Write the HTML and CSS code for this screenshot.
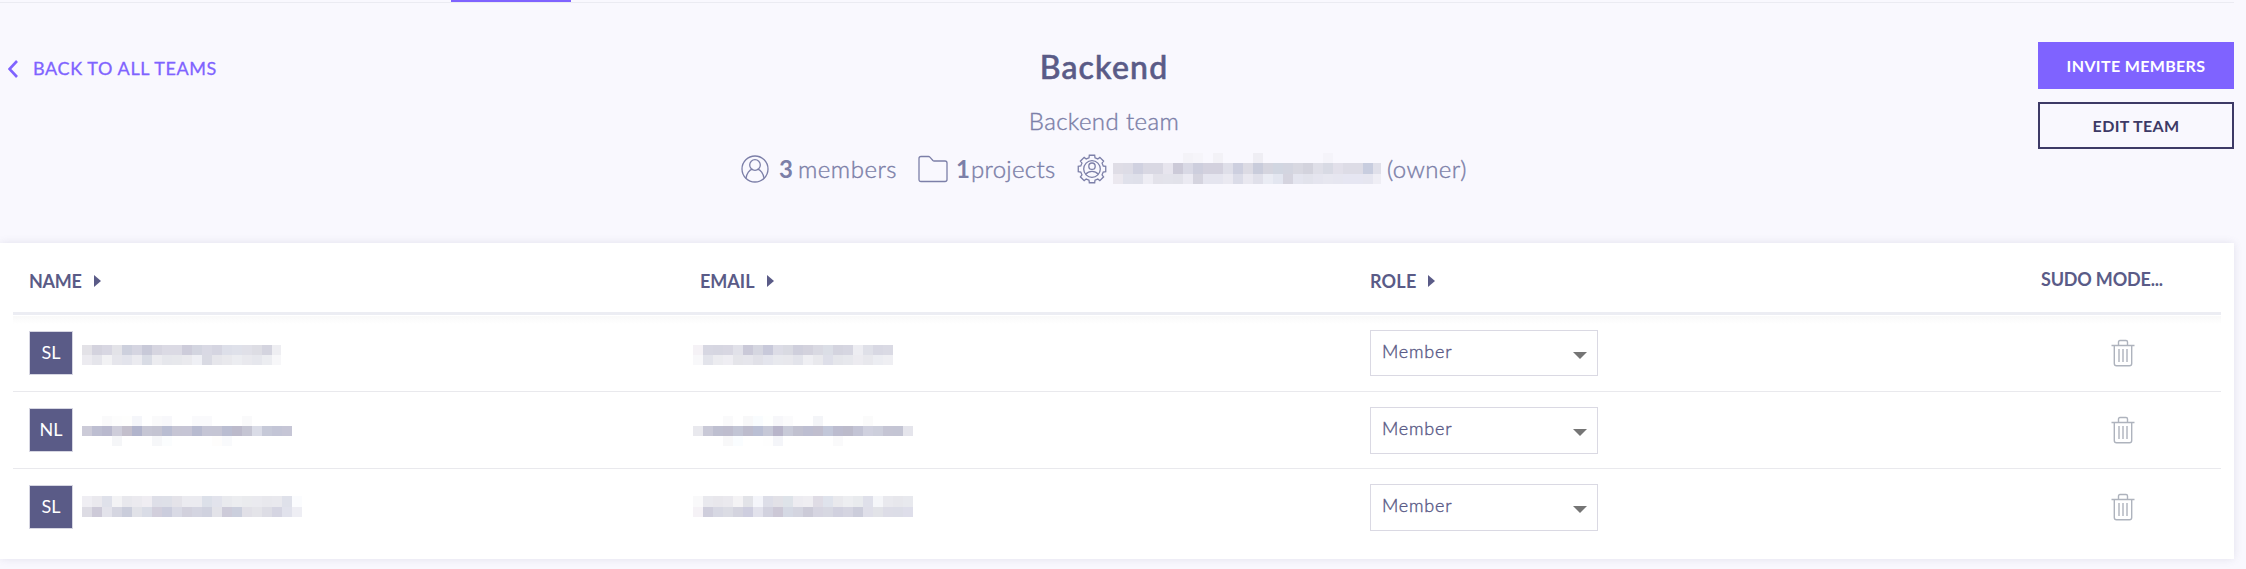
FILE: index.html
```html
<!DOCTYPE html>
<html lang="en">
<head>
<meta charset="utf-8">
<title>Backend</title>
<link rel="stylesheet" href="styles.css">
</head>
<body>
<svg width="0" height="0" class="sprite">
  <symbol id="trash" viewBox="0 0 24 28"><path d="M.5 6.500h23M7.500 6V3q0-1.500 1.500-1.500h6q1.500 0 1.500 1.500v3M3.300 6.500v18q0 2.200 2.200 2.200h13q2.200 0 2.200-2.200v-18M8 10v13M12 10v13M16 10v13"/></symbol>
</svg>
<nav class="tabs"><span class="tab"></span></nav>
<header class="head">
  <a class="back"><svg class="chev" viewBox="0 0 10 18"><path d="M9 1 1.500 9 9 17"/></svg><span>BACK TO ALL TEAMS</span></a>
  <div class="summary">
    <h1>Backend</h1>
    <p class="desc">Backend team</p>
    <div class="meta">
      <svg class="icon user" viewBox="0 0 28 28"><circle cx="14" cy="14" r="13"/><circle cx="14" cy="10" r="5.300"/><path d="M5 23.300c.6-5 3.500-8.600 6.400-9.200M23 23.300c-.6-5-3.500-8.600-6.400-9.200"/></svg>
      <b class="n3">3</b><span class="t-members">members</span>
      <svg class="icon folder" viewBox="0 0 30 28"><path d="M3 1.500h7.500q.8 0 1.400.6l3 3.400q.5.500 1.200.5h10.900q2 0 2 2v16.500q0 2-2 2H3q-2 0-2-2v-21q0-2 2-2z"/></svg>
      <b class="n1">1</b><span class="t-projects">projects</span>
      <svg class="icon gear" viewBox="0 0 30 30"><path id="cog"/><circle cx="15" cy="15" r="8.300"/><circle cx="15" cy="12.200" r="3.200"/><path d="M8.600 20.300c2-2.300 4.100-3 6.400-3s4.400.7 6.400 3"/></svg>
      <span class="mosaic owner-name" data-m="owner"></span><span class="t-owner">(owner)</span>
    </div>
  </div>
  <div class="actions">
    <button class="btn primary"><span>INVITE MEMBERS</span></button>
    <button class="btn outline"><span>EDIT TEAM</span></button>
  </div>
</header>
<main class="panel">
  <div class="row thead">
    <div class="th name"><span>NAME</span><i class="sort"></i></div>
    <div class="th"><span>EMAIL</span><i class="sort"></i></div>
    <div class="th role"><span>ROLE</span><i class="sort"></i></div>
    <div class="th sudo"><span>SUDO MODE...</span></div>
  </div>
  <div class="row r1">
    <div class="cell"><span class="avatar">SL</span><span class="mosaic" data-m="name1"></span></div>
    <div class="cell email"><span class="mosaic" data-m="email1"></span></div>
    <div class="cell"><div class="select"><span>Member</span><i></i></div></div>
    <div class="cell del"><svg class="trash"><use href="#trash"/></svg></div>
  </div>
  <div class="row r2">
    <div class="cell"><span class="avatar">NL</span><span class="mosaic" data-m="name2"></span></div>
    <div class="cell email"><span class="mosaic" data-m="email2"></span></div>
    <div class="cell"><div class="select"><span>Member</span><i></i></div></div>
    <div class="cell del"><svg class="trash"><use href="#trash"/></svg></div>
  </div>
  <div class="row r3">
    <div class="cell"><span class="avatar">SL</span><span class="mosaic" data-m="name3"></span></div>
    <div class="cell email"><span class="mosaic" data-m="email3"></span></div>
    <div class="cell"><div class="select"><span>Member</span><i></i></div></div>
    <div class="cell del"><svg class="trash"><use href="#trash"/></svg></div>
  </div>
</main>
<script src="mosaic.js"></script>
</body>
</html>
```
FILE: mosaic.js
```js
// Redacted values: rows of [height, colours]; "-" leaves a tile empty.
const DATA = {
  owner: { width: 268, rows: [
    [10, "- - - - - - - f4f3f8 f6f5fa - f3f2f7 - - - efeef4 - - - - - - f5f4fa - - - - -"],
    [11, "dfdde6 dddce6 d0d1e0 d9d8e3 d9d8e3 e7e5ee cccad8 d9d9e5 cdcedd d3d1de d3d1de dfdfe9 cdcfdf dcdbe4 c9ccdb d5d5df d1d6e1 d3d5e0 d8d8e1 d3d3dd dfdfe8 d8dae4 e2e0ea dddce6 dddce6 c8cddf e0e0ea"],
    [10, "ebe8ef e0e1eb dfe0ea eeedf4 e3e2ea e3e3eb e2e2ea ebeaf2 d5d4df e5e5ef e5e5ef eae9f1 dbdce8 e9e8f0 e0e0ea eaecf4 e3e6f0 d5d4df e4e5ef e2e3ec e5e5ef e7e7f0 e6e6f0 e6e6f2 e6e6f2 e6e6f0 efeef5"]] },
  name1: { width: 199, rows: [
    [10, "e3e2e7 d4d3de d8d7e2 e3e3e8 cdd0dd d5d5e1 c8c9d8 d6d5e0 dbdae4 dbdae4 cdccda d3d5e0 d9d9e4 d5d5e1 dddfe9 dfe1ea e0e0e8 dddde4 d4d4df eeeef2"],
    [10, "ecebf0 e5e5eb f2f2f4 e6e6ec e3e4ec ebebf0 d9dce5 ececf0 e6e7ec e7e8ec eaeaee eff0f5 d9dae3 e6e6eb e9e9ed ecedf1 e9e9ee e6e7ed ecedf1 f7f7f9"]] },
  name2: { width: 210, rows: [
    [10, "- - fafafb fdfdfd fefefd f5f6fa - fafafb f8f8fb - - fafafc fafafc - - - fafafb - - - -"],
    [10, "cccbd8 bdbed1 b9b9ce cecdda c3bfcc b1b4cc c6c6d4 c4c4d2 b9bdd2 c6c5d4 c6c5d5 b8bbd0 c5c5d5 c5c5d4 babdd1 bcbacb c5c5d3 dadce7 c6c9d8 c3c5d6 c6c6d6"],
    [10, "- - - f5f6f8 - - - f6f7f9 fbfdfe - - - - fefdfc f9fafc - - - - - -"]] },
  name3: { width: 220, rows: [
    [11, "efeef3 eae9ee dfe1ea f3f3f5 e8e8ed ebeaef efedf2 dedfe8 dee0e8 e4e3e9 ebebf0 ebebf0 dce0e9 e2e3ec e9eaee ecedf0 eaebee eaeaef e8e8ed e9e9ee dfe1ea fbfcfe"],
    [10, "dddce4 cdcad8 e3e3eb d5d6e1 cacddb e1e2e8 d9dce6 d2cfdc cbcddd d9dae5 d2d1dd d4d5e1 d0d2df e3e3e9 cdcbd9 cbcfdd e1e0e7 e4e4e9 dddde5 d5d5e2 e1e2ec eeeef4"]] },
  email1: { width: 200, rows: [
    [10, "f5f2f6 d7d7e2 d6d6e1 d8d7e2 e1e1e9 cac9d8 d5d6e0 c8c9da dcdce6 d9dae2 cfcfdc d3d2dd d9d9e2 dbdee6 d4d4df d6d6e1 ededf2 dfe0e8 d8d8e3 dadae4"],
    [10, "f8f8fa e3e4eb ececf0 efeef3 e5e5ea e6e6ec e1e1e8 e4e5ed e8e9ee e8e8ed e3e4eb efeff3 e9e9ed dedfe9 e5e6eb e7e8ed ecebf0 e8e8ed ecedf2 efeff3"]] },
  email2: { width: 220, rows: [
    [10, "- - - fafafb - f8f8f9 f9fcfe fefffe f7f7fa fbfbfc - - f4f5f8 - - - - fbfbfb - - - -"],
    [10, "e9e9ee c9c9d7 bebfd0 bebdce c2c5d5 bdbccd babfd4 c6c8d7 b8b5ca c8cad8 c1c1d0 bdbed1 c0bece c2c7d9 bcbccf bcbbcb c3c4d5 d0d1df cdcfdc c5c5d4 c4c5d4 e5e5ec"],
    [10, "- - - f8f8f9 fafdff - - fefefe f4f5f9 - - - - - fafafb - - - - - - -"]] },
  email3: { width: 220, rows: [
    [11, "f9f9fa e9e9ee e8e7ec eae9ee f4f3f5 e2e3e8 f4f5fa dddee8 e2e1e7 dee3e9 edecf1 efeef2 dfdce5 dfe3ec e9e9ed edeef1 e9ebee dfe0ea f5f6f9 e9e9ee e7e7ec e8e9ee"],
    [10, "f5f2f6 cfcedc d7d8e3 dbdce4 d4d4df cecedf e2e2ec d2d2df ccc8d6 d5d9e4 d4d5e0 cccbd8 d6d5e1 d7d8e2 d1d1df d5d5e1 cccddb dfdfe9 e2e3e8 dddde7 dcdde7 dedeea"]] }
};
document.querySelectorAll("[data-m]").forEach(el => {
  const { width, rows } = DATA[el.dataset.m];
  const height = rows.reduce((sum, r) => sum + r[0], 0);
  let y = 0, out = "";
  for (const [h, colours] of rows) {
    colours.split(" ").forEach((c, i) => {
      if (c !== "-") out += `<rect x="${i * 10}" y="${y}" width="10" height="${h}" fill="#${c}"/>`;
    });
    y += h;
  }
  el.innerHTML = `<svg width="${width}" height="${height}" shape-rendering="crispEdges">${out}</svg>`;
});

// Eight-toothed gear outline.
const pts = [];
for (let i = 0; i < 8; i++) {
  for (const [offset, r] of [[-15, 11.6], [-11, 14], [11, 14], [15, 11.6]]) {
    const a = (i * 45 + offset) * Math.PI / 180;
    pts.push((15 + r * Math.cos(a)).toFixed(2) + " " + (15 + r * Math.sin(a)).toFixed(2));
  }
}
document.getElementById("cog").setAttribute("d", "M" + pts.join("L") + "Z");
```
FILE: styles.css
```css
* { box-sizing: border-box; }
body { margin: 0; height: 569px; overflow: hidden; background: #f9f8fe; color: #5a5b87; font-family: Lato, sans-serif; font-size: 18px; }
svg { display: block; flex: none; fill: none; }
.sprite { display: none; }
.tabs { width: 2234px; height: 3px; border-bottom: 1px solid #ebebf2; padding-left: 451px; }
.tab { display: block; width: 120px; height: 2px; background: #7f63ff; }
.head { display: grid; grid-template-columns: 600px 1010px 1fr; width: 2234px; height: 240px; }
.back { display: flex; align-items: center; height: 22px; margin: 55px 0 0 8px; color: #7f63ff; line-height: 22px; white-space: nowrap; }
.chev { width: 10px; height: 18px; margin-right: 15px; stroke: #7f63ff; stroke-width: 2.6; }
.back span { margin-top: -2px; letter-spacing: .6px; -webkit-text-stroke: .3px #7f63ff; }
.summary { display: flex; flex-direction: column; align-items: center; }
h1 { margin: 44px 2px 0 0; font-size: 32px; line-height: 40px; font-weight: 500; -webkit-text-stroke: .6px #5a5b87; letter-spacing: 1.2px; }
.desc { margin: 19px 2px 0 0; font-size: 24px; line-height: 30px; font-weight: 300; color: #7c7fa8; letter-spacing: .4px; -webkit-text-stroke: .4px #7c7fa8; }
.meta { display: flex; align-items: center; width: 728px; height: 32px; margin-top: 17px; font-size: 24px; line-height: 30px; font-weight: 300; color: #7c7fa8; white-space: nowrap; }
.meta span { -webkit-text-stroke: .4px #7c7fa8; }
.icon { stroke: #7c7fa8; stroke-width: 1.3; }
.user { width: 28px; height: 28px; margin-right: 10px; }
.n3, .n1 { width: 19px; font-weight: 700; }
.n1 { width: 15px; }
.t-members { width: 120px; letter-spacing: .5px; }
.folder { width: 30px; height: 28px; margin-right: 8px; }
.t-projects { width: 106px; letter-spacing: .3px; }
.gear { width: 30px; height: 30px; margin-right: 6px; }
.owner-name { width: 268px; margin: -2px 6px 0 0; }
.t-owner { letter-spacing: .4px; }
.actions { display: flex; flex-direction: column; align-items: flex-end; gap: 13px; padding-top: 39px; }
.btn { width: 196px; height: 47px; border: 0; padding: 0; font: 700 16px/20px Lato, sans-serif; }
.primary { background: #7f63ff; color: #fff; }
.outline { border: 2px solid #3d3a66; background: transparent; color: #3d3a66; }
.btn span { letter-spacing: .35px; }
.panel { width: 2234px; height: 316px; padding: 0 13px; background: #fff; box-shadow: 0 0 8px rgba(90,91,135,.14); }
.row { display: grid; grid-template-columns: 670px 670px 671px 1fr; height: 77px; padding-left: 16px; border-bottom: 1px solid #e9e9ed; }
.row:last-child { border-bottom-color: transparent; }
.thead { height: 72px; border-bottom: 3px solid #ecedf3; }
.r1 { background: linear-gradient(#fff 1px, #f9f9f9 1px, #fff 9px); }
.th { display: flex; align-items: center; font-weight: 700; line-height: 22px; padding: 6px 0 0 1px; white-space: nowrap; }
.th.name { padding-left: 0; letter-spacing: -.3px; }
.th.role { padding-left: 1px; letter-spacing: .2px; }
.th.sudo { padding-top: 3px; letter-spacing: -.2px; }
.sort { margin-left: 12px; border: solid transparent; border-width: 6px 0 6px 7px; border-left-color: #5a5b87; }
.cell { display: flex; align-items: center; }
.email .mosaic { margin-left: -6px; }
.r1 .mosaic { margin-top: 4px; }
.r2 .mosaic { margin-top: 2px; }
.r3 .mosaic { margin-top: -1px; }
.avatar { width: 44px; height: 44px; margin-right: 9px; border: 1px solid #d6d6e2; background: #5a5b87; color: #fff; font-size: 18px; line-height: 40px; text-align: center; }
.select { display: flex; align-items: center; justify-content: space-between; width: 228px; height: 47px; margin: 0 0 0 1px; padding: 0 10px 4px 11px; border: 1px solid #dad9e3; background: #fff; font-weight: 300; letter-spacing: .8px; }
.r1 .select { height: 46px; }
.select span { -webkit-text-stroke: .4px #5a5b87; }
.select i { margin-top: 8px; border: solid transparent; border-width: 7px 7px 0; border-top-color: #757575; }
.del { padding-left: 71px; }
.trash { width: 24px; height: 28px; stroke: #aeb3bd; stroke-width: 1.4; }
```
